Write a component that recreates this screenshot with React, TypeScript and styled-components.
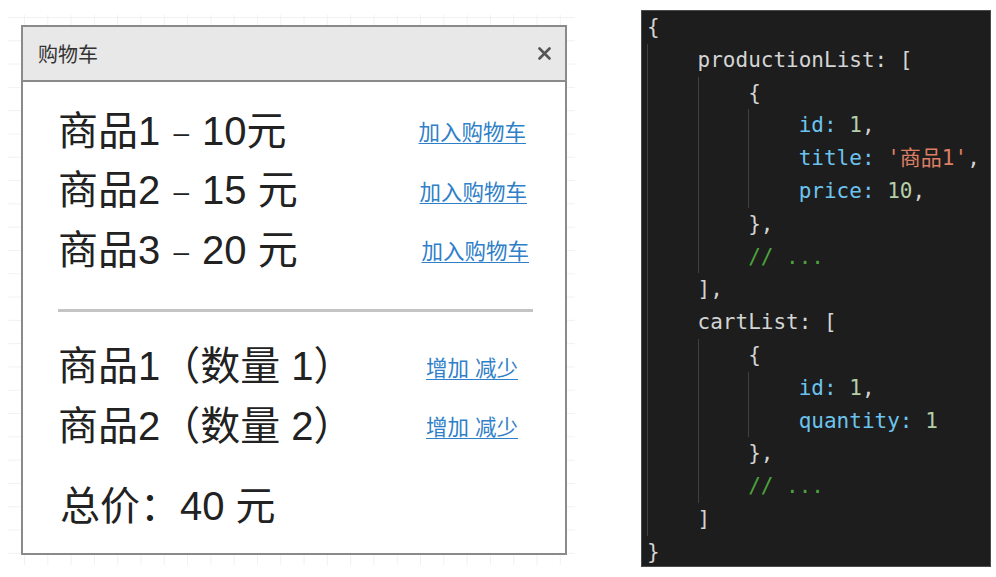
import React from "react";
import styled, { createGlobalStyle } from "styled-components";

const GlobalStyle = createGlobalStyle`
  html, body {
    margin: 0;
    padding: 0;
    background: #ffffff;
  }
  body {
    font-family: "Liberation Sans", "Noto Sans CJK SC", sans-serif;
    color: #222;
  }
`;

const Page = styled.div`
  display: flex;
  align-items: flex-start;
  width: 996px;
  height: 577px;
  overflow: hidden;
`;

const Canvas = styled.div`
  margin: 15px 0 0 8px;
  width: 567px;
  height: 550px;
  padding: 10px 0 0 13px;
  box-sizing: border-box;
  background-color: #fff;
  background-image: linear-gradient(to right, #f1f1f1 1px, transparent 1px),
    linear-gradient(to bottom, #f1f1f1 1px, transparent 1px);
  background-size: 23.3px 23.3px;
  background-position: 16px 2px;
`;

const Panel = styled.div`
  width: 546px;
  height: 530px;
  box-sizing: border-box;
  border: 2px solid #8a8a8a;
  background: #fff;
  display: flex;
  flex-direction: column;
`;

const Header = styled.div`
  height: 55px;
  flex: none;
  box-sizing: border-box;
  background: #e8e8e8;
  border-bottom: 2px solid #8a8a8a;
  display: flex;
  align-items: center;
  justify-content: space-between;
  padding: 0 14px 0 15px;
`;

const Title = styled.span`
  font-family: "Noto Sans CJK SC", sans-serif;
  font-size: 20px;
  color: #333;
`;

const Close = styled.svg`
  width: 13px;
  height: 13px;
`;

const Body = styled.div`
  padding: 19px 0 0 35px;
  display: flex;
  flex-direction: column;
`;

const Row = styled.div<{ $h: number; $right: number }>`
  height: ${(p) => p.$h}px;
  display: flex;
  align-items: center;
  justify-content: space-between;
  padding-right: ${(p) => p.$right}px;
`;

const Name = styled.span`
  font-size: 40px;
  color: #222;
  white-space: pre;
  line-height: 1;
`;

const Dash = styled.span`
  font-size: 28px;
  vertical-align: 3px;
  margin: 0 2px;
`;

const Link = styled.a`
  font-size: 21.5px;
  color: #2f80c8;
  text-decoration: underline;
  text-underline-offset: 3px;
  text-decoration-thickness: 1px;
  white-space: pre;
  cursor: pointer;
`;

const Divider = styled.div`
  height: 3px;
  background: #c4c4c4;
  margin: 29px 32px 25px 0;
`;

const Total = styled.div`
  font-size: 40px;
  color: #222;
  margin-top: 30px;
  padding-left: 2px;
  white-space: pre;
  line-height: 1;
`;

const CodePanel = styled.div`
  margin: 10px 0 0 66px;
  width: 350px;
  height: 557px;
  box-sizing: border-box;
  background: #1d1d1d;
  border: 1px solid #4a4a4a;
  padding: 0 0 0 5px;
  font-family: "DejaVu Sans Mono", "Noto Sans CJK SC", monospace;
  font-size: 21px;
  color: #d4d4d4;
  overflow: hidden;
`;

const Line = styled.div`
  height: 32.8px;
  line-height: 32.8px;
  display: flex;
  white-space: pre;
`;

const Indent = styled.span<{ $guide: boolean }>`
  display: inline-block;
  width: 4ch;
  flex: none;
  box-sizing: border-box;
  border-left: 1px solid ${(p) => (p.$guide ? "#404040" : "transparent")};
`;

const Tok = styled.span<{ $kind?: "prop" | "num" | "str" | "com" }>`
  color: ${(p) =>
    p.$kind === "prop"
      ? "#6cc4ee"
      : p.$kind === "num"
      ? "#b5cea8"
      : p.$kind === "str"
      ? "#dd7f64"
      : p.$kind === "com"
      ? "#4ea23c"
      : "#d4d4d4"};
`;

type Part = [string, ("prop" | "num" | "str" | "com")?];

const code: { level: number; parts: Part[] }[] = [
  { level: 0, parts: [["{"]] },
  { level: 1, parts: [["productionList: ["]] },
  { level: 2, parts: [["{"]] },
  { level: 3, parts: [["id:", "prop"], [" "], ["1", "num"], [","]] },
  { level: 3, parts: [["title:", "prop"], [" "], ["'商品1'", "str"], [","]] },
  { level: 3, parts: [["price:", "prop"], [" "], ["10", "num"], [","]] },
  { level: 2, parts: [["},"]] },
  { level: 2, parts: [["// ...", "com"]] },
  { level: 1, parts: [["],"]] },
  { level: 1, parts: [["cartList: ["]] },
  { level: 2, parts: [["{"]] },
  { level: 3, parts: [["id:", "prop"], [" "], ["1", "num"], [","]] },
  { level: 3, parts: [["quantity:", "prop"], [" "], ["1", "num"]] },
  { level: 2, parts: [["},"]] },
  { level: 2, parts: [["// ...", "com"]] },
  { level: 1, parts: [["]"]] },
  { level: 0, parts: [["}"]] },
];

const products = [
  { title: "商品1", price: "10元", right: 39 },
  { title: "商品2", price: "15 元", right: 38 },
  { title: "商品3", price: "20 元", right: 36 },
];

const cart = ["商品1（数量 1）", "商品2（数量 2）"];

export default function App() {
  return (
    <Page>
      <GlobalStyle />
      <Canvas>
        <Panel>
          <Header>
            <Title>购物车</Title>
            <Close viewBox="0 0 13 13">
              <path
                d="M1.5 1.5 L11.5 11.5 M11.5 1.5 L1.5 11.5"
                stroke="#555"
                strokeWidth="2.6"
                strokeLinecap="round"
              />
            </Close>
          </Header>
          <Body>
            {products.map((p) => (
              <Row key={p.title} $h={59.5} $right={p.right}>
                <Name>
                  {p.title} <Dash>–</Dash> {p.price}
                </Name>
                <Link>加入购物车</Link>
              </Row>
            ))}
            <Divider />
            {cart.map((c) => (
              <Row key={c} $h={59.5} $right={47}>
                <Name>{c}</Name>
                <Link>增加 减少</Link>
              </Row>
            ))}
            <Total>总价：40 元</Total>
          </Body>
        </Panel>
      </Canvas>
      <CodePanel>
        {code.map((line, i) => (
          <Line key={i}>
            {Array.from({ length: line.level }).map((_, j) => (
              <Indent key={j} $guide />
            ))}
            {line.parts.map(([text, kind], k) => (
              <Tok key={k} $kind={kind}>
                {text}
              </Tok>
            ))}
          </Line>
        ))}
      </CodePanel>
    </Page>
  );
}
